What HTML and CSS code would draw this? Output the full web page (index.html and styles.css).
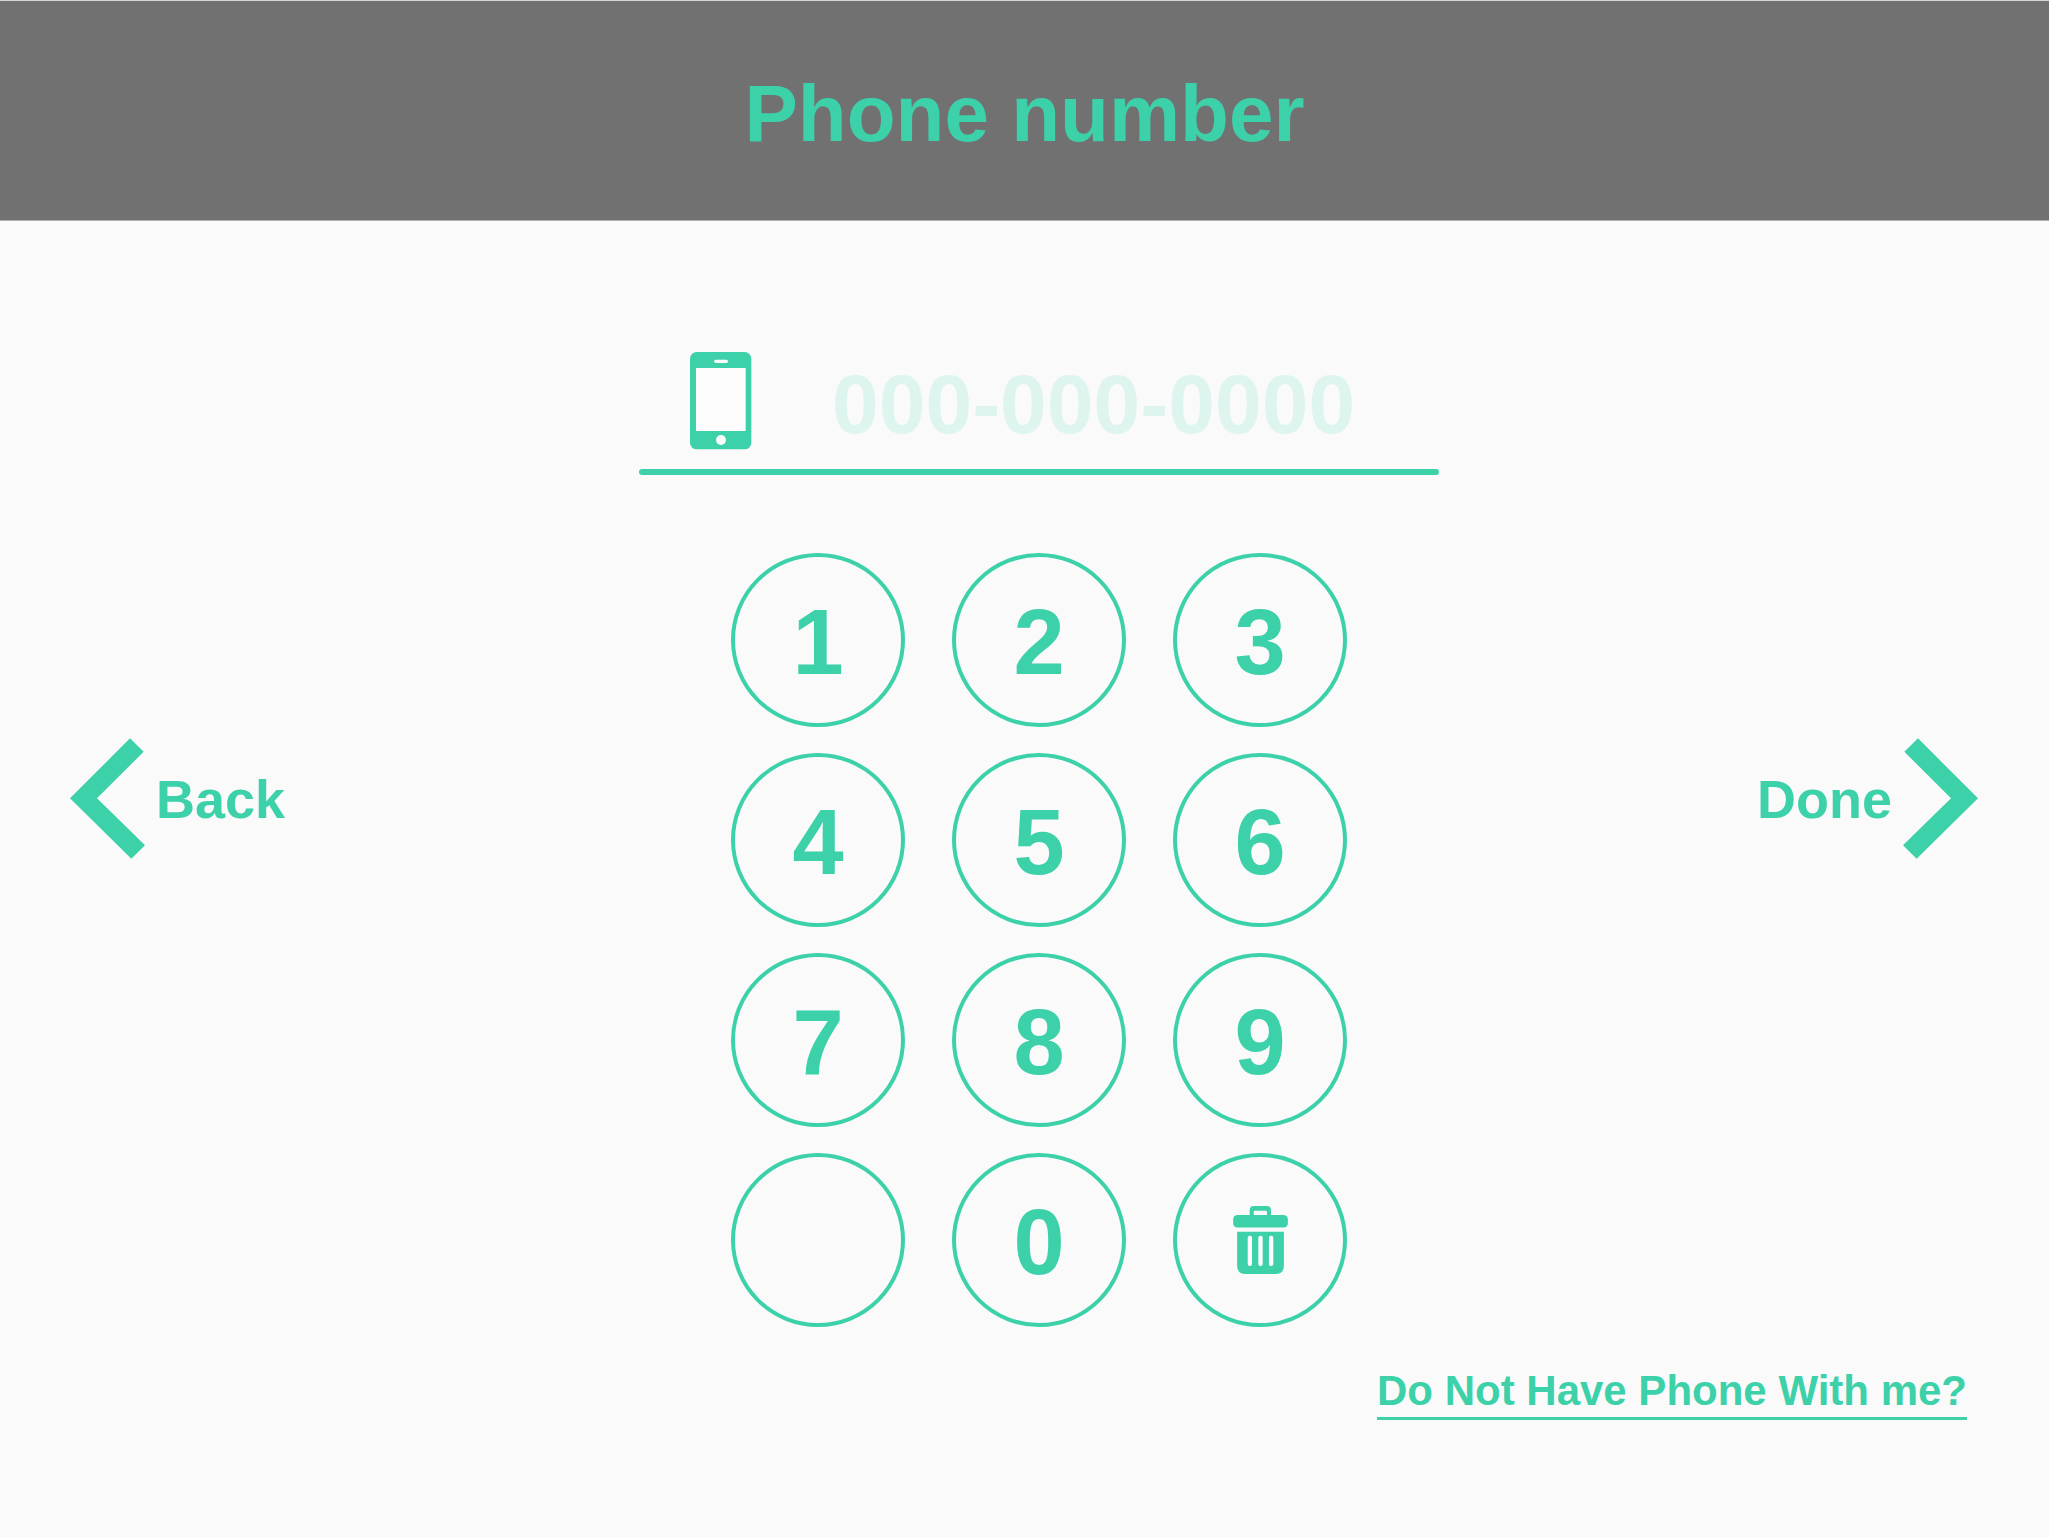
FILE: index.html
```html
<!DOCTYPE html>
<html lang="en">
<head>
  <meta charset="utf-8">
  <meta name="viewport" content="width=device-width, initial-scale=1">
  <title>Phone number</title>
  <link rel="stylesheet" href="styles.css">
</head>
<body>
  <header class="header">
    <h1 class="title">Phone number</h1>
  </header>
  <main class="main">
    <button class="nav nav-back" type="button">
      <svg class="arrow" viewBox="0 0 225 361" aria-hidden="true"><path d="M180 0L221 40L81 180L225 321L184 361L0 180Z"/></svg>
      <span>Back</span>
    </button>
    <form class="entry">
      <div class="field">
        <label class="field-label" for="phone" aria-label="Phone number">
          <svg class="phone-icon" viewBox="0 0 186 294" aria-hidden="true">
            <rect width="184" height="292" rx="20"/>
            <rect class="hole" x="18" y="48" width="149" height="189"/>
            <rect class="hole" x="72" y="23" width="42" height="10" rx="5"/>
            <circle class="hole" cx="93" cy="264" r="15"/>
          </svg>
        </label>
        <input class="field-input" id="phone" type="tel" placeholder="000-000-0000">
      </div>
      <div class="keypad">
        <button class="key" type="button">1</button>
        <button class="key" type="button">2</button>
        <button class="key" type="button">3</button>
        <button class="key" type="button">4</button>
        <button class="key" type="button">5</button>
        <button class="key" type="button">6</button>
        <button class="key" type="button">7</button>
        <button class="key" type="button">8</button>
        <button class="key" type="button">9</button>
        <button class="key" type="button" disabled></button>
        <button class="key" type="button">0</button>
        <button class="key key-clear" type="button" aria-label="Clear">
          <svg class="trash-icon" viewBox="0 0 165 205" aria-hidden="true">
            <path d="M50 28V12Q50 0 62 0H102Q114 0 114 12V28H102V18Q102 14 98 14H66Q62 14 62 18V28Z"/>
            <rect y="27" width="165" height="38" rx="13"/>
            <path d="M12 78H153V180Q153 205 128 205H37Q12 205 12 180Z"/>
            <rect class="hole" x="44" y="90" width="13" height="91" rx="6"/>
            <rect class="hole" x="76" y="90" width="13" height="91" rx="6"/>
            <rect class="hole" x="108" y="90" width="13" height="91" rx="6"/>
          </svg>
        </button>
      </div>
    </form>
    <button class="nav nav-done" type="button">
      <span>Done</span>
      <svg class="arrow" viewBox="0 0 225 361" aria-hidden="true"><path d="M45 0L4 40L144 180L0 321L41 361L225 180Z"/></svg>
    </button>
  </main>
  <footer class="footer">
    <a class="skip" href="#">Do Not Have Phone With me?</a>
  </footer>
</body>
</html>
```
FILE: styles.css
```css
:root {
  --green: #3dd1aa;
  --green-pale: #def4ee;
  --page: #fafafa;
  --bar: #717171;
}

* {
  box-sizing: border-box;
}

body {
  margin: 0;
  min-height: 100vh;
  background: var(--page);
  color: var(--green);
  font-family: "Liberation Sans", Arial, sans-serif;
  font-weight: bold;
}

button,
input {
  margin: 0;
  padding: 0;
  border: 0;
  background: none;
  color: inherit;
  font: inherit;
}

svg {
  display: block;
  fill: currentColor;
}

.hole {
  fill: #fdfdfd;
}

.header {
  padding: 73px 0 66px;
  border-top: 1px solid #d6d6d6;
  border-bottom: 1px solid #b3b0b0;
  background: var(--bar);
}

.title {
  margin: 0;
  font-size: 80px;
  line-height: 80px;
  text-align: center;
}

.main {
  display: grid;
  grid-template-columns: 1fr auto 1fr;
  align-items: center;
  padding: 0 71px 0 70px;
}

.nav {
  display: flex;
  align-items: center;
  gap: 11px;
  font-size: 54px;
  line-height: 62px;
  cursor: pointer;
}

.nav span {
  padding-top: 2px;
}

.nav-back {
  justify-self: start;
}

.nav-done {
  justify-self: end;
}

.arrow {
  width: 75px;
  height: 121px;
}

.entry {
  padding: 131px 0 48px 30px;
}

.field {
  display: flex;
  flex-wrap: wrap;
  align-items: flex-end;
  width: 800px;
  padding-left: 51px;
}

.field::after {
  content: "";
  flex: 0 0 800px;
  height: 6px;
  margin: 19px 0 0 -51px;
  border-radius: 3px;
  background: var(--green);
}

.field-label {
  margin-right: 80px;
}

.phone-icon {
  width: 62px;
  height: 98px;
}

.field-input {
  width: 600px;
  height: 92px;
  font-size: 84px;
  outline: 0;
}

.field-input::placeholder {
  color: var(--green-pale);
  opacity: 1;
}

.keypad {
  display: grid;
  grid-template-columns: repeat(3, 174px);
  justify-content: center;
  gap: 26px 47px;
  margin-top: 78px;
}

.key {
  display: flex;
  align-items: center;
  justify-content: center;
  height: 174px;
  padding-top: 4px;
  border: 4px solid var(--green);
  border-radius: 50%;
  font-size: 92px;
  cursor: pointer;
}

.key-clear {
  padding-top: 0;
}

.trash-icon {
  width: 55px;
  height: 68px;
}

.footer {
  display: flex;
  justify-content: flex-end;
  padding: 0 82px 48px;
}

.skip {
  padding-bottom: 10px;
  border-bottom: 3px solid;
  color: inherit;
  font-size: 42px;
  line-height: 32px;
  text-decoration: none;
}
```
